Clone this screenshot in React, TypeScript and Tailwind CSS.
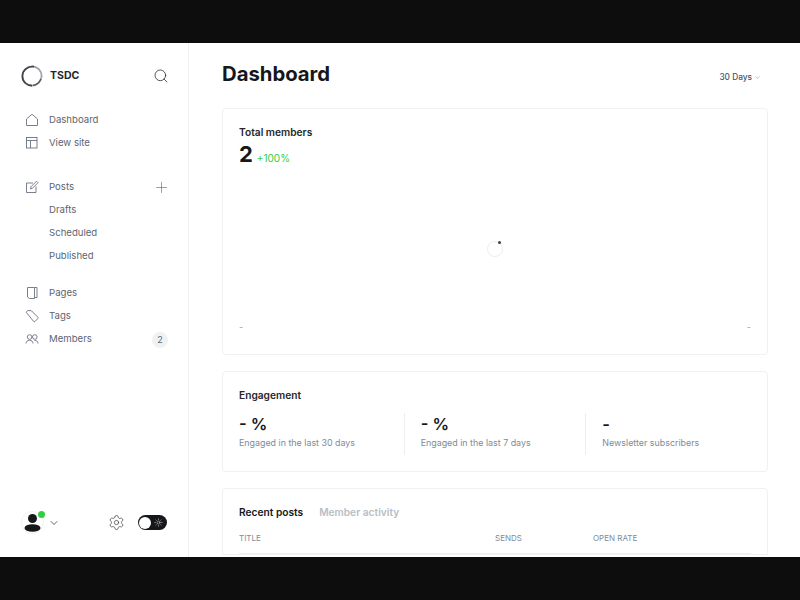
import React from "react";
import { Search, Plus, ChevronDown, Settings, Sun } from "lucide-react";

function IconHome() {
    return (
        <svg width="14" height="14" viewBox="0 0 14 14" fill="none" stroke="#6b7280" strokeWidth="0.9">
            <path d="M1.5 12.5V6L7 1.2 12.5 6V12.5Z" strokeLinejoin="round" />
        </svg>
    );
}

function IconLayout() {
    return (
        <svg width="14" height="14" viewBox="0 0 14 14" fill="none" stroke="#6b7280" strokeWidth="0.9">
            <rect x="1.5" y="1.5" width="10.5" height="10.5" />
            <path d="M1.5 4.5H12M5.5 4.5V12" />
        </svg>
    );
}

function IconPost() {
    return (
        <svg width="14" height="14" viewBox="0 0 14 14" fill="none" stroke="#6b7280" strokeWidth="0.9">
            <path d="M8 3H1.5V12.5H11V6.5" strokeLinejoin="round" />
            <path d="M5.5 9L6 6.7 11.5 1.2 13 2.7 7.5 8.2Z" strokeLinejoin="round" />
        </svg>
    );
}

function IconPages() {
    return (
        <svg width="14" height="14" viewBox="0 0 14 14" fill="none" stroke="#6b7280" strokeWidth="0.9">
            <path d="M2.5 1.5H9.5V12.5H4.5L2.5 11Z" strokeLinejoin="round" />
            <path d="M9.5 1.5H12V11.5H9.5" />
        </svg>
    );
}

function IconTag() {
    return (
        <svg width="14" height="14" viewBox="0 0 14 14" fill="none" stroke="#6b7280" strokeWidth="0.9">
            <path d="M1.2 3.2L2.6 1.5 6.5 1.8 12.8 8.2C13.2 8.6 13.2 9.2 12.8 9.6L10 12.4C9.6 12.8 9 12.8 8.6 12.4Z" strokeLinejoin="round" />
        </svg>
    );
}

function IconMembers() {
    return (
        <svg width="14" height="14" viewBox="0 0 14 14" fill="none" stroke="#6b7280" strokeWidth="0.9">
            <circle cx="4.6" cy="5" r="2.3" />
            <circle cx="9.8" cy="5" r="2.3" />
            <path d="M1 11.5C1 9.5 2.5 8.3 4.6 8.3S8 9.5 8 11.5M9.4 8.3C11.5 8.3 13 9.5 13 11.5" />
        </svg>
    );
}

function IconLogo() {
    return (
        <svg width="22" height="22" viewBox="0 0 22 22" fill="none">
            <circle cx="11" cy="11" r="9.6" stroke="#a1a1aa" strokeWidth="1.8" />
            <path d="M13 1.6C7 1 1.4 5 1.4 11.5 1.4 16.8 5.7 20.6 11 20.6" stroke="#3f3f46" strokeWidth="1.6" />
            <path d="M19.8 14C18.5 17.5 15.5 19.8 12 20.4" stroke="#52525b" strokeWidth="1.2" />
        </svg>
    );
}

function NavRow({ icon, label, children }: { icon?: React.ReactNode; label: string; children?: React.ReactNode }) {
    return (
        <div className="flex h-[23px] items-center text-[#5c6570]">
            <div className="mt-[-1px] flex w-[21px] shrink-0 justify-center">{icon}</div>
            <span className="ml-[7px] flex-1 text-[9.6px]">{label}</span>
            {children}
        </div>
    );
}

function Stat({ value, label, first }: { value: string; label: string; first?: boolean }) {
    return (
        <div className={`flex h-[42px] flex-1 flex-col ${first ? "" : "border-l border-[#eceef0] pl-4"}`}>
            <div className="mt-[1px] text-[16.5px] leading-[20px] font-semibold text-[#15171a]">{value}</div>
            <div className="mt-[2px] text-[8.9px] leading-[14px] text-[#7c8b9a]">{label}</div>
        </div>
    );
}

export default function App() {
    return (
        <div className="flex h-[600px] w-[800px] flex-col justify-center overflow-hidden bg-[#0d0d0d] font-['Inter',sans-serif]">
            <div className="flex h-[514px] bg-white">
                <aside className="flex w-[189px] shrink-0 flex-col border-r border-[#f0f1f3] pt-[22px] pr-[20px] pb-[23px] pl-[21px]">
                    <div className="flex h-[22px] items-center">
                        <IconLogo />
                        <span className="ml-[7px] flex-1 text-[10.5px] font-bold text-[#27272a]">TSDC</span>
                        <Search size={16} strokeWidth={1.2} className="mr-[-1px] text-[#27272a]" />
                    </div>

                    <nav className="mt-[22px] flex flex-col">
                        <NavRow icon={<IconHome />} label="Dashboard" />
                        <NavRow icon={<IconLayout />} label="View site" />
                    </nav>
                    <nav className="mt-[21px] flex flex-col">
                        <NavRow icon={<IconPost />} label="Posts">
                            <Plus size={17} strokeWidth={0.8} className="mr-[-2px] text-[#4b5563]" />
                        </NavRow>
                        <NavRow label="Drafts" />
                        <NavRow label="Scheduled" />
                        <NavRow label="Published" />
                    </nav>
                    <nav className="mt-[14px] flex flex-col">
                        <NavRow icon={<IconPages />} label="Pages" />
                        <NavRow icon={<IconTag />} label="Tags" />
                        <NavRow icon={<IconMembers />} label="Members">
                            <span className="flex h-[16px] w-[16px] items-center justify-center rounded-full bg-[#eff1f3] text-[9px]">2</span>
                        </NavRow>
                    </nav>

                    <div className="mt-auto flex items-center">
                        <div className="relative flex h-[23px] w-[23px] items-center justify-center rounded-full border border-[#f0f1f3]">
                            <svg width="17" height="19" viewBox="0 0 17 19" fill="#15171a">
                                <circle cx="8.5" cy="5.5" r="4.5" />
                                <ellipse cx="8.5" cy="15" rx="8" ry="3.8" />
                            </svg>
                            <span className="absolute top-[-1px] right-[-2px] h-[7px] w-[7px] rounded-full bg-[#30cf43]" />
                        </div>
                        <ChevronDown size={12} strokeWidth={1.4} className="ml-[4px] text-[#27272a]" />
                        <Settings size={17} strokeWidth={0.9} className="ml-auto text-[#27272a]" />
                        <div className="mr-[1px] ml-[13px] flex h-[15px] w-[29px] items-center justify-between rounded-full bg-[#15171a] px-[1px]">
                            <span className="h-[12px] w-[12px] rounded-full bg-white" />
                            <Sun size={9} strokeWidth={1.2} className="mr-[3px] text-white" />
                        </div>
                    </div>
                </aside>

                <main className="flex-1 overflow-hidden pr-[32px] pl-[33px]">
                    <div className="flex h-[65px] items-start justify-between pt-[17px]">
                        <h1 className="text-[20.3px] leading-[28px] font-bold text-[#15171a]">Dashboard</h1>
                        <div className="mt-[11px] mr-[7px] flex items-center gap-[2px] text-[8.3px] font-medium text-[#4b5563]">
                            30 Days
                            <ChevronDown size={7} strokeWidth={1.2} />
                        </div>
                    </div>

                    <section className="flex h-[247px] flex-col rounded-[4px] border border-[#f0f1f3] px-4 pt-[16px] pb-[22px]">
                        <div className="text-[10.2px] leading-[14px] font-semibold text-[#27272a]">Total members</div>
                        <div className="mt-[1px] flex items-baseline gap-[4px]">
                            <span className="text-[22px] leading-[28px] font-bold text-[#15171a]">2</span>
                            <span className="text-[10px] text-[#30cf43]">+100%</span>
                        </div>
                        <div className="flex flex-1 items-center justify-center pt-[3px]">
                            <div className="relative mt-[4px] h-[16px] w-[16px] rounded-full border border-[#eceef0]">
                                <span className="absolute top-[-1px] left-[10px] h-[3px] w-[3px] rounded-full bg-[#394047]" />
                            </div>
                        </div>
                        <div className="flex justify-between text-[9px] leading-[10px] text-[#9aa5b1]">
                            <span>-</span>
                            <span>-</span>
                        </div>
                    </section>

                    <section className="mt-[16px] h-[101px] rounded-[4px] border border-[#f0f1f3] px-4 pt-[16px]">
                        <div className="text-[10.2px] leading-[14px] font-semibold text-[#27272a]">Engagement</div>
                        <div className="mt-[11px] flex gap-[16px]">
                            <Stat first value="- %" label="Engaged in the last 30 days" />
                            <Stat value="- %" label="Engaged in the last 7 days" />
                            <Stat value="-" label="Newsletter subscribers" />
                        </div>
                    </section>

                    <section className="mt-[16px] rounded-t-[4px] border border-[#f0f1f3] px-4 pt-[15px]">
                        <div className="flex gap-4 text-[10.2px] leading-[16px] font-semibold">
                            <span className="text-[#15171a]">Recent posts</span>
                            <span className="text-[#b8bec5]">Member activity</span>
                        </div>
                        <div className="mt-[12px] flex border-b border-[#eceef0] pb-[9px] text-[8px] leading-[12px] text-[#7c8b9a]">
                            <span className="w-[256px]">TITLE</span>
                            <span className="w-[98px]">SENDS</span>
                            <span>OPEN RATE</span>
                        </div>
                    </section>
                </main>
            </div>
        </div>
    );
}
